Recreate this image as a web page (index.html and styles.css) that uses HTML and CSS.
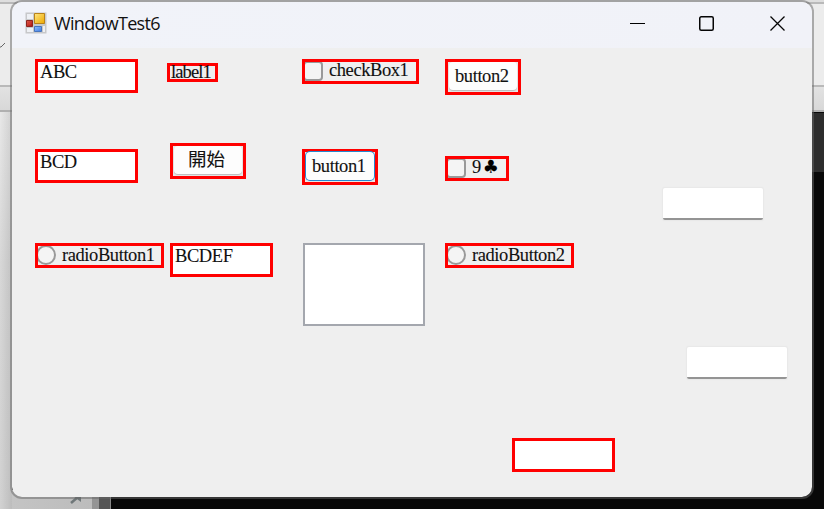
FILE: index.html
```html
<!DOCTYPE html>
<html lang="zh-Hant">
<head>
<meta charset="utf-8">
<title>WindowTest6</title>
<link rel="stylesheet" href="styles.css">
</head>
<body>
<div class="backdrop">
  <div class="pane-top-left"></div>
  <div class="pane-left"></div>
  <div class="pane-bottom"></div>
  <div class="pane-corner"></div>
  <div class="pane-right"></div>
  <svg class="marks" width="824" height="509" fill="none"><path d="M0 47l1 0 4-4" stroke="#666"/><path d="M71 503l7-6" stroke="#6f7779" stroke-width="2.5"/><path d="M73 496h8v6z" fill="#6f7779"/></svg>
</div>
<main class="window">
  <header class="titlebar">
    <svg class="app-icon" width="22" height="22" viewBox="0 0 22 22">
      <defs>
        <linearGradient id="gold" x2="1" y2="1"><stop stop-color="#ffe680"/><stop offset="1" stop-color="#eda800"/></linearGradient>
        <linearGradient id="blue" x2="1" y2="1"><stop stop-color="#8dbcff"/><stop offset="1" stop-color="#3f7be0"/></linearGradient>
        <linearGradient id="red" x2="1" y2="1"><stop stop-color="#e06050"/><stop offset="1" stop-color="#a80f0c"/></linearGradient>
      </defs>
      <path fill="#c7c8ca" d="M.5.5h21v21H.5z"/>
      <path fill="#eef0f4" d="M2 2h6v5H2zM2 16h6v4H2zM18 14h2v6h-2z"/>
      <path fill="url(#gold)" stroke="#b98218" d="M9.5 1.5h10v10h-10z"/>
      <path fill="url(#red)" stroke="#8e2420" d="M1.5 8.500h6v6h-6z"/>
      <path fill="#d83b32" d="M3.500 10.500h2v2h-2z"/>
      <path fill="url(#blue)" stroke="#4774bd" d="M9.500 14.500h7v5h-7z"/>
    </svg>
    <h1 class="title">WindowTest6</h1>
    <svg class="caption-buttons" width="156" height="16" fill="none" stroke="#050505">
      <path stroke="#000" d="M0 8.500h15"/>
      <rect x="69.750" y="1.750" width="13.500" height="13.500" rx="1.500" stroke-width="1.500"/>
      <path d="M140.500 1.500l14 14M154.500 1.500l-14 14" stroke-width="1.300"/>
    </svg>
  </header>
  <section class="form">
    <div class="found field abc">ABC</div>
    <div class="found label">label1</div>
    <div class="found option check-one"><i class="box"></i><span>checkBox1</span></div>
    <div class="found button button-two"><span>button2</span></div>
    <div class="found field bcd">BCD</div>
    <div class="found button start"><span>開始</span></div>
    <div class="found button focused button-one"><span>button1</span></div>
    <div class="found option nine"><i class="box"></i><span>9<b class="suit">♣</b></span></div>
    <div class="plain-input upper"></div>
    <div class="found option radio-one"><i class="box round"></i><span>radioButton1</span></div>
    <div class="found field bcdef">BCDEF</div>
    <div class="listbox"></div>
    <div class="found option radio-two"><i class="box round"></i><span>radioButton2</span></div>
    <div class="plain-input lower"></div>
    <div class="found field empty"></div>
  </section>
</main>
</body>
</html>
```
FILE: styles.css
```css
* { box-sizing: border-box; }
body { margin: 0; width: 824px; height: 509px; overflow: hidden; position: relative; background: #080808; }

/* Applications visible behind the window */
.backdrop > * { position: absolute; }
.pane-top-left { left: 0; top: 0; width: 824px; height: 112px; border-bottom: 2px solid #b0b0b0; background: linear-gradient(#dedede 0 2px, #b9b9b9 2px 4px, #ececec 4px 85px, #b9b9b9 85px 87px, #e2e2e2 87px, #d8d8d8); }
.pane-left { left: 0; top: 112px; width: 12px; height: 397px; background: linear-gradient(90deg, transparent, rgba(0, 0, 0, .1)), linear-gradient(#e8e8e8, #d8d8d8 150px, #d2d2d2); }
.pane-bottom { left: 12px; top: 490px; width: 87px; height: 19px; background: linear-gradient(90deg, #c4c4c4, #bcbcbc 80px, #949494 80px); }
.pane-corner { left: 99px; top: 490px; width: 12px; height: 19px; background: #555; border-right: 1px solid #888; }
.pane-right { left: 812px; top: 113px; width: 12px; height: 59px; background: #2d2d2d; }
.marks { left: 0; top: 0; }

.window { position: absolute; left: 10px; top: 0; width: 804px; height: 499px; border: 2px solid rgba(102, 102, 102, .5); border-radius: 12px; background: #efefef; background-clip: padding-box; overflow: hidden; }
.titlebar { height: 46px; display: flex; align-items: center; padding: 0 26px 4px 13px; background: linear-gradient(90deg, #f1f3f9, #f1f2f8); }
.title { margin: 0 auto 0 7px; font: 400 18px/24px "Open Sans", "Noto Sans", sans-serif; letter-spacing: -.68px; color: #111; }

.form { display: grid; grid-template-columns: 132px 135px 143px 218px 1fr; grid-template-rows: 84px 100px 103px 92px 1fr; padding: 11px 0 0 23px; align-items: start; justify-items: start; font: 18.500px/20px "Liberation Serif", "Noto Sans CJK TC", serif; letter-spacing: -.42px; color: #111; -webkit-text-stroke: .1px #111; }
.found { border: 3px solid #f00; white-space: nowrap; }
.field { width: 103px; height: 34px; padding: 0 2px; background: #fff; }
.label { grid-area: 1 / 2; width: 51px; height: 19px; margin-top: 4px; line-height: 13px; padding-left: 1px; letter-spacing: -.9px; }
.option { height: 25px; display: flex; align-items: center; line-height: 19px; overflow: hidden; }
.option .box { width: 20px; height: 20px; flex: none; margin: -2px 6px 0 -2px; border: 2px solid #999; border-radius: 4px; background: #f4f4f4; }
.option .box.round { border-radius: 50%; margin-top: -1px; }
.button { width: 76px; height: 36px; padding: 0 1px 1px; background: #e8e8e8; }
.button span { display: block; height: 28px; padding-top: 4px; border-radius: 4px; background: #fdfdfd; box-shadow: 0 1px 1px #bbb; padding-left: 6px; }
.focused span { box-shadow: 0 0 0 1px #2687cf; }

.abc { grid-area: 1 / 1; }
.check-one { grid-area: 1 / 3; width: 117px; }
.check-one span { margin-top: -2px; }
.button-two { grid-area: 1 / 4; }
.bcd { grid-area: 2 / 1; margin-top: 6px; }
.start { grid-area: 2 / 2; margin-left: 3px; }
.start span { padding: 2px 0 0 14px; font-family: "Noto Sans CJK TC", sans-serif; font-weight: 400; letter-spacing: 0; }
.button-one { grid-area: 2 / 3; margin-top: 6px; }
.nine { grid-area: 2 / 4; width: 64px; margin-top: 13px; }
.nine span { margin-top: -2px; }
.suit { display: inline-block; margin-left: 2px; font: 18px/14px "DejaVu Sans", sans-serif; color: #000; }
.radio-one { grid-area: 3 / 1; width: 129px; }
.bcdef { grid-area: 3 / 2; margin-left: 3px; }
.listbox { grid-area: 3 / 3; width: 122px; height: 83px; margin: 0 0 0 1px; border: 2px solid #a4a7ae; background: #fff; }
.radio-two { grid-area: 3 / 4; width: 129px; }
.plain-input { grid-column: 5; width: 100px; height: 32px; background: #fff; border-bottom: 2px solid #949494; border-radius: 2px; box-shadow: 0 0 1px 1px #e8e8e8; }
.upper { grid-row: 2; margin-top: 45px; }
.lower { grid-row: 4; margin: 1px 0 0 24px; }
.empty { grid-area: 5 / 4; margin-left: 67px; }
```
